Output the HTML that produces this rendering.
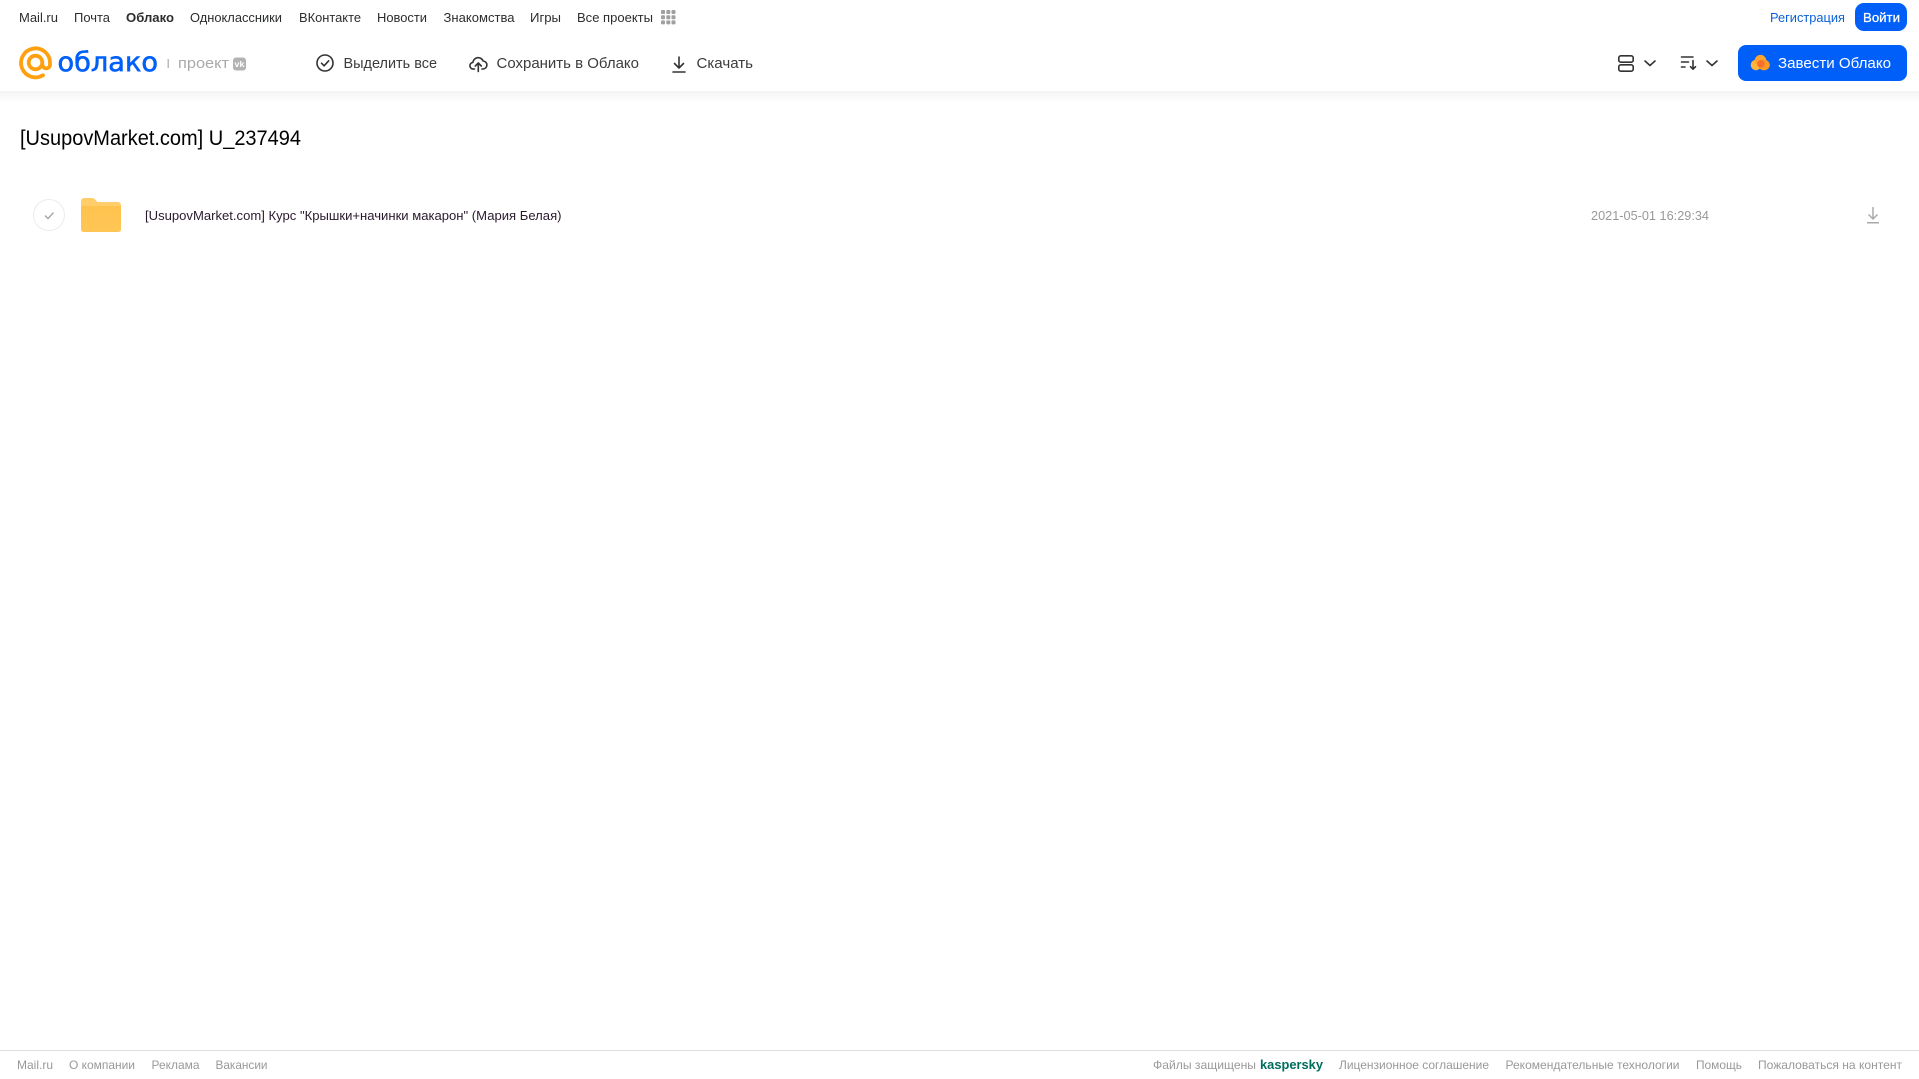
<!DOCTYPE html>
<html lang="ru">
<head>
<meta charset="utf-8">
<title>Облако</title>
<style>
html,body{margin:0;padding:0;background:#fff;width:1919px;height:1079px;overflow:hidden}
svg{display:block}
text{font-family:"Liberation Sans",sans-serif;white-space:pre}
.nav{font-size:13px;fill:#2c2d2e}
.tool{font-size:15px;fill:#3c3c3e}
.foot{font-size:12px;fill:#999}
.ic{fill:none;stroke:#333;stroke-width:1.6;stroke-linecap:round;stroke-linejoin:round}
.gr{fill:none;stroke:#aaa;stroke-width:1.5}
</style>
</head>
<body>
<svg xmlns="http://www.w3.org/2000/svg" width="1919" height="1079" viewBox="0 0 1919 1079">
<defs>
<linearGradient id="sh" x1="0" y1="0" x2="0" y2="1"><stop offset="0" stop-color="#f3f3f3"/><stop offset="1" stop-color="#fff"/></linearGradient>
<linearGradient id="fd" x1="0" y1="0" x2="0" y2="1"><stop offset="0" stop-color="#ffc24e"/><stop offset="1" stop-color="#ffc655"/></linearGradient>
</defs>
<rect width="1919" height="1079" fill="#fff"/>
<rect y="91" width="1919" height="12" fill="url(#sh)"/>

<!-- top nav -->
<text class="nav" x="19" y="22" textLength="39" lengthAdjust="spacingAndGlyphs">Mail.ru</text>
<text class="nav" x="74" y="22" textLength="36" lengthAdjust="spacingAndGlyphs">Почта</text>
<text class="nav" x="126" y="22" textLength="48" lengthAdjust="spacingAndGlyphs" font-weight="700">Облако</text>
<text class="nav" x="190" y="22" textLength="92" lengthAdjust="spacingAndGlyphs">Одноклассники</text>
<text class="nav" x="299" y="22" textLength="62" lengthAdjust="spacingAndGlyphs">ВКонтакте</text>
<text class="nav" x="377" y="22" textLength="50" lengthAdjust="spacingAndGlyphs">Новости</text>
<text class="nav" x="443.500" y="22" textLength="71" lengthAdjust="spacingAndGlyphs">Знакомства</text>
<text class="nav" x="530" y="22" textLength="31" lengthAdjust="spacingAndGlyphs">Игры</text>
<text class="nav" x="577" y="22" textLength="76" lengthAdjust="spacingAndGlyphs">Все проекты</text>
<g fill="#a0a0a0">
<rect x="661" y="10" width="4" height="4" rx="1"/><rect x="666.300" y="10" width="4" height="4" rx="1"/><rect x="671.500" y="10" width="4" height="4" rx="1"/>
<rect x="661" y="15.200" width="4" height="4" rx="1"/><rect x="666.300" y="15.200" width="4" height="4" rx="1"/><rect x="671.500" y="15.200" width="4" height="4" rx="1"/>
<rect x="661" y="20.400" width="4" height="4" rx="1"/><rect x="666.300" y="20.400" width="4" height="4" rx="1"/><rect x="671.500" y="20.400" width="4" height="4" rx="1"/>
</g>

<text x="1770" y="22" font-size="13" fill="#0b62d6" textLength="75" lengthAdjust="spacingAndGlyphs">Регистрация</text>
<rect x="1855" y="3" width="52" height="28" rx="9" fill="#005ff9"/>
<text x="1863" y="22" font-size="13" fill="#fff" stroke="#fff" stroke-width=".25" textLength="37" lengthAdjust="spacingAndGlyphs">Войти</text>

<!-- logo -->
<g fill="none" stroke="#ffa010" stroke-width="3.800" stroke-linecap="round">
<circle cx="35.500" cy="62.500" r="6.800"/>
<path d="M43 75.300A14.500 14.500 0 1 1 50 62v2.200a3.700 3.700 0 0 1-7.500 .8"/>
</g>
<text x="57.500" y="71" font-size="26.500" fill="#005ff9" stroke="#005ff9" stroke-width=".6" style="font-family:'DejaVu Sans',sans-serif" textLength="100.500" lengthAdjust="spacingAndGlyphs">облако</text>
<rect x="167.600" y="59" width="1.200" height="9" fill="#aaa"/>
<text x="178" y="68" font-size="15" fill="#aaa" textLength="51" lengthAdjust="spacingAndGlyphs">проект</text>
<rect x="233" y="57.500" width="13" height="13" rx="3" fill="#b3b3b3"/>
<text x="234.500" y="67" font-size="8.500" font-weight="700" fill="#fff" textLength="10" lengthAdjust="spacingAndGlyphs">vk</text>

<!-- toolbar -->
<circle class="ic" cx="325" cy="63" r="8"/>
<path class="ic" d="M321.500 63.200l2.600 2.600 4.600-5"/>
<text class="tool" x="343.500" y="68" textLength="93.500" lengthAdjust="spacingAndGlyphs">Выделить все</text>
<path class="ic" d="M474.500 69h-1a3.300 3.300 0 0 1-.6-6.600 5.300 5.300 0 0 1 10.200-1.400 4 4 0 0 1 -.4 8h-.8"/>
<path class="ic" d="M478.300 71.500v-8.500M475.300 66l3-3 3 3"/>
<text class="tool" x="496.500" y="68" textLength="142.500" lengthAdjust="spacingAndGlyphs">Сохранить в Облако</text>
<path class="ic" d="M679 57v11M674.500 63.500l4.500 4.500 4.500-4.500M673 72h12"/>
<text class="tool" x="696.500" y="68" textLength="56.500" lengthAdjust="spacingAndGlyphs">Скачать</text>

<!-- view / sort -->
<rect class="ic" x="1618.800" y="55.800" width="14.400" height="6.400" rx="2"/>
<rect class="ic" x="1618.800" y="64.800" width="14.400" height="6.400" rx="2"/>
<path class="ic" d="M1645 61l5 4.500 5-4.500"/>
<path class="ic" stroke-width="1.300" d="M1681.500 57h11.500M1681.500 62h7M1681.500 67h3.500"/>
<path class="ic" d="M1693 60.500v8.500M1690.500 66.700l2.500 2.500 2.500-2.500"/>
<path class="ic" d="M1707 61l5 4.500 5-4.500"/>
<rect x="1738" y="45" width="169" height="36" rx="8" fill="#005ff9"/>
<ellipse cx="1756" cy="65" rx="5.300" ry="5.200" fill="#ffb43c"/>
<circle cx="1760.500" cy="60.700" r="5.800" fill="#ffa42e"/>
<ellipse cx="1764" cy="65" rx="5.800" ry="5.300" fill="#ff9b20"/>
<ellipse cx="1761" cy="63.800" rx="3.800" ry="3.800" fill="#f7702c"/>
<text x="1778" y="68" font-size="15" fill="#fff" textLength="113" lengthAdjust="spacingAndGlyphs">Завести Облако</text>

<!-- content -->
<text x="20" y="145" font-size="21" fill="#000" textLength="281" lengthAdjust="spacingAndGlyphs">[UsupovMarket.com] U_237494</text>
<circle cx="49" cy="215" r="15.500" fill="#fff" stroke="#ececec"/>
<path d="M45 215.500l3 3 5.500-6" fill="none" stroke="#aaa" stroke-width="1.500"/>
<path d="M81 201a3 3 0 0 1 3-3h8.500a3 3 0 0 1 2.200 1l2.800 3h20.500a3 3 0 0 1 3 3v4H81z" fill="#ffce6b"/>
<path d="M81 206h40v23.500a2.500 2.500 0 0 1-2.500 2.500h-35a2.500 2.500 0 0 1-2.500-2.500z" fill="url(#fd)"/>
<text x="145" y="220" font-size="13" fill="#2a1a2e" textLength="416.500" lengthAdjust="spacingAndGlyphs">[UsupovMarket.com] Курс "Крышки+начинки макарон" (Мария Белая)</text>
<text x="1591" y="220" font-size="13" fill="#999" textLength="118" lengthAdjust="spacingAndGlyphs">2021-05-01 16:29:34</text>
<path class="gr" d="M1873 207v12M1868.500 214.500l4.500 4.500 4.500-4.500M1867 222.700h12"/>

<!-- footer -->
<rect y="1050" width="1919" height="1" fill="#ddd"/>
<text class="foot" x="17" y="1069" textLength="36" lengthAdjust="spacingAndGlyphs">Mail.ru</text>
<text class="foot" x="69" y="1069" textLength="66" lengthAdjust="spacingAndGlyphs">О компании</text>
<text class="foot" x="151.500" y="1069" textLength="48" lengthAdjust="spacingAndGlyphs">Реклама</text>
<text class="foot" x="215.500" y="1069" textLength="52" lengthAdjust="spacingAndGlyphs">Вакансии</text>
<text class="foot" x="1153" y="1069" textLength="103" lengthAdjust="spacingAndGlyphs">Файлы защищены</text>
<text x="1260" y="1069" font-size="13" font-weight="700" fill="#006d5c" textLength="63" lengthAdjust="spacingAndGlyphs">kaspersky</text>
<text class="foot" x="1339" y="1069" textLength="150" lengthAdjust="spacingAndGlyphs">Лицензионное соглашение</text>
<text class="foot" x="1505.500" y="1069" textLength="174" lengthAdjust="spacingAndGlyphs">Рекомендательные технологии</text>
<text class="foot" x="1696" y="1069" textLength="46" lengthAdjust="spacingAndGlyphs">Помощь</text>
<text class="foot" x="1758" y="1069" textLength="144" lengthAdjust="spacingAndGlyphs">Пожаловаться на контент</text>
</svg>
</body>
</html>
